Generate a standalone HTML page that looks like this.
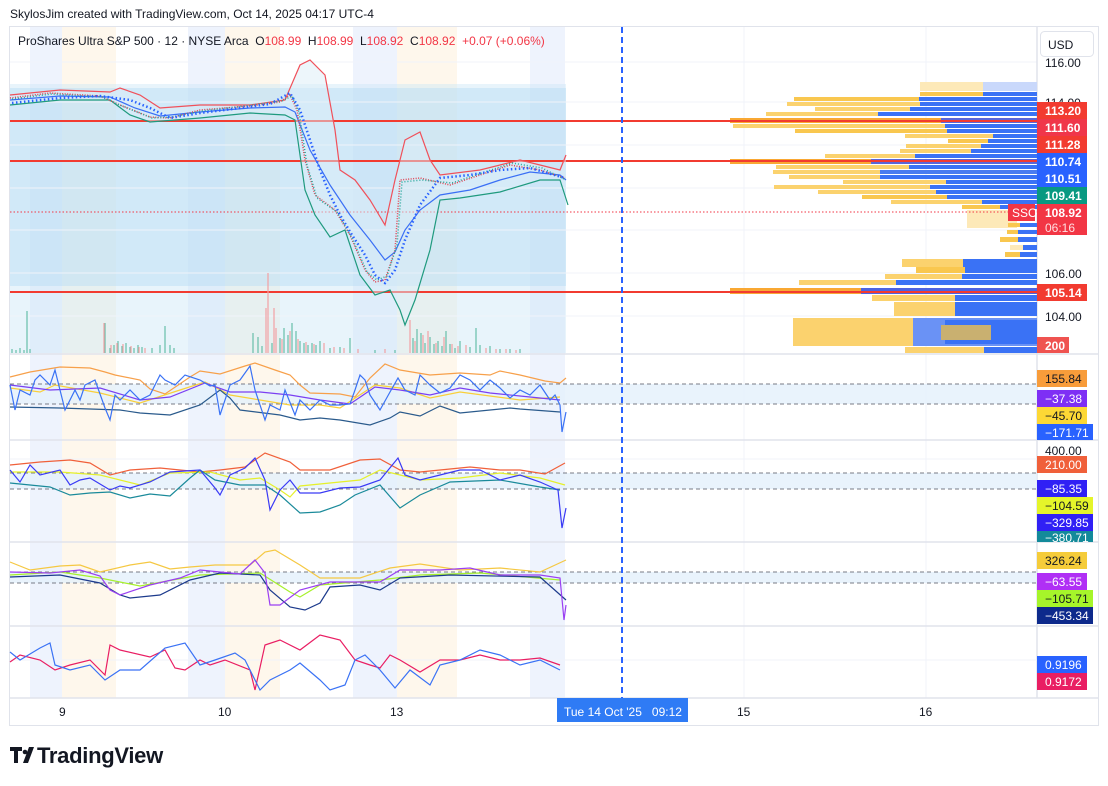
<!DOCTYPE html>
<html><head><meta charset="utf-8"><style>
body{margin:0;width:1108px;height:786px;background:#fff;overflow:hidden;font-family:"Liberation Sans",sans-serif}
svg{position:absolute;left:0;top:0}
text{font-family:"Liberation Sans",sans-serif}
</style></head><body>
<svg width="1108" height="786" viewBox="0 0 1108 786">
<rect x="0" y="0" width="1108" height="786" fill="#fff"/>
<text x="10" y="18" font-size="12" fill="#131722">SkylosJim created with TradingView.com, Oct 14, 2025 04:17 UTC-4</text>
<rect x="9.5" y="26.5" width="1089" height="699" fill="#fff" stroke="#e0e3eb"/>
<!-- session bands -->
<g>
<rect x="30" y="27" width="32" height="671" fill="#eef3fd"/>
<rect x="188" y="27" width="37" height="671" fill="#eef3fd"/>
<rect x="353" y="27" width="44" height="671" fill="#eef3fd"/>
<rect x="530" y="27" width="35" height="671" fill="#eef3fd"/>
<rect x="62" y="27" width="54" height="671" fill="#fef7ec"/>
<rect x="225" y="27" width="55" height="671" fill="#fef7ec"/>
<rect x="397" y="27" width="60" height="671" fill="#fef7ec"/>
</g>
<!-- main pane blue rects -->
<rect x="10" y="84" width="556" height="269" fill="#cce6f7" opacity="0.45"/>
<rect x="10" y="88" width="556" height="198" fill="#b5dcf3" opacity="0.45"/>
<!-- grid -->
<g stroke="#f0f3fa" stroke-width="1">
<line x1="10" y1="62" x2="1037" y2="62"/><line x1="10" y1="102" x2="1037" y2="102"/><line x1="10" y1="145" x2="1037" y2="145"/><line x1="10" y1="188" x2="1037" y2="188"/><line x1="10" y1="230" x2="1037" y2="230"/><line x1="10" y1="273" x2="1037" y2="273"/><line x1="10" y1="316" x2="1037" y2="316"/>
<line x1="744" y1="27" x2="744" y2="698"/><line x1="926" y1="27" x2="926" y2="698"/>
</g>
<!-- pane separators -->
<g stroke="#e0e3eb" stroke-width="1.5">
<line x1="10" y1="354" x2="1098" y2="354"/><line x1="10" y1="440" x2="1098" y2="440"/><line x1="10" y1="542" x2="1098" y2="542"/><line x1="10" y1="626" x2="1098" y2="626"/><line x1="10" y1="698" x2="1098" y2="698"/>
<line x1="1037" y1="27" x2="1037" y2="698"/>
</g>
<!-- volume profile -->
<g>
<rect x="920" y="82" width="117" height="9" fill="#fde9b8"/><rect x="983" y="82" width="54" height="9" fill="#c9d8fb"/>
<rect x="920" y="92" width="117" height="4" fill="#f9c74f"/><rect x="983" y="92" width="54" height="4" fill="#3a72f5"/>
<rect x="794" y="97" width="243" height="4" fill="#f9c74f"/><rect x="919" y="97" width="118" height="4" fill="#3a72f5"/>
<rect x="787" y="102" width="250" height="4" fill="#fbd26e"/><rect x="920" y="102" width="117" height="4" fill="#3a72f5"/>
<rect x="815" y="107" width="222" height="4" fill="#fbd26e"/><rect x="910" y="107" width="127" height="4" fill="#3a72f5"/>
<rect x="766" y="112" width="271" height="4" fill="#fbd26e"/><rect x="878" y="112" width="159" height="4" fill="#3a72f5"/>
<rect x="730" y="118" width="307" height="5" fill="#f9a833"/><rect x="941" y="118" width="96" height="5" fill="#5a66d8"/>
<rect x="733" y="124" width="304" height="4" fill="#fbd26e"/><rect x="945" y="124" width="92" height="4" fill="#3a72f5"/>
<rect x="795" y="129" width="242" height="4" fill="#f9c74f"/><rect x="947" y="129" width="90" height="4" fill="#3a72f5"/>
<rect x="905" y="134" width="132" height="4" fill="#fbd26e"/><rect x="993" y="134" width="44" height="4" fill="#3a72f5"/>
<rect x="948" y="139" width="89" height="4" fill="#f9c74f"/><rect x="988" y="139" width="49" height="4" fill="#3a72f5"/>
<rect x="906" y="144" width="131" height="4" fill="#fbd26e"/><rect x="981" y="144" width="56" height="4" fill="#3a72f5"/>
<rect x="900" y="149" width="137" height="4" fill="#fbd26e"/><rect x="971" y="149" width="66" height="4" fill="#3a72f5"/>
<rect x="825" y="154" width="212" height="4" fill="#fbd26e"/><rect x="915" y="154" width="122" height="4" fill="#3a72f5"/>
<rect x="730" y="159" width="307" height="5" fill="#f9a833"/><rect x="871" y="159" width="166" height="5" fill="#5a66d8"/>
<rect x="776" y="165" width="261" height="4" fill="#fbd26e"/><rect x="909" y="165" width="128" height="4" fill="#3a72f5"/>
<rect x="773" y="170" width="264" height="4" fill="#fbd26e"/><rect x="880" y="170" width="157" height="4" fill="#4a7cf0"/>
<rect x="789" y="175" width="248" height="4" fill="#fbd26e"/><rect x="880" y="175" width="157" height="4" fill="#3a72f5"/>
<rect x="843" y="180" width="194" height="4" fill="#fbd26e"/><rect x="946" y="180" width="91" height="4" fill="#3a72f5"/>
<rect x="774" y="185" width="263" height="4" fill="#fbd26e"/><rect x="930" y="185" width="107" height="4" fill="#3a72f5"/>
<rect x="818" y="190" width="219" height="4" fill="#fbd26e"/><rect x="936" y="190" width="101" height="4" fill="#3a72f5"/>
<rect x="862" y="195" width="175" height="4" fill="#f9c74f"/><rect x="947" y="195" width="90" height="4" fill="#3a72f5"/>
<rect x="891" y="200" width="146" height="4" fill="#fbd26e"/><rect x="982" y="200" width="55" height="4" fill="#3a72f5"/>
<rect x="962" y="205" width="75" height="4" fill="#f9c74f"/><rect x="1000" y="205" width="37" height="4" fill="#3a72f5"/>
<rect x="967" y="210" width="50" height="18" fill="#fde9b8"/>
<rect x="1008" y="223" width="29" height="4" fill="#f9c74f"/><rect x="1020" y="223" width="17" height="4" fill="#3a72f5"/>
<rect x="1007" y="230" width="30" height="4" fill="#f9c74f"/><rect x="1018" y="230" width="19" height="4" fill="#3a72f5"/>
<rect x="1000" y="237" width="37" height="5" fill="#f9c74f"/><rect x="1018" y="237" width="19" height="5" fill="#3a72f5"/>
<rect x="1010" y="245" width="27" height="5" fill="#fde9b8"/><rect x="1023" y="245" width="14" height="5" fill="#3a72f5"/>
<rect x="1005" y="252" width="32" height="5" fill="#f9c74f"/><rect x="1020" y="252" width="17" height="5" fill="#3a72f5"/>
<rect x="902" y="259" width="135" height="8" fill="#fbd26e"/><rect x="963" y="259" width="74" height="8" fill="#3a72f5"/>
<rect x="916" y="267" width="121" height="6" fill="#f9c74f"/><rect x="965" y="267" width="72" height="6" fill="#3a72f5"/>
<rect x="885" y="274" width="152" height="5" fill="#fbd26e"/><rect x="962" y="274" width="75" height="5" fill="#3a72f5"/>
<rect x="799" y="280" width="238" height="5" fill="#fbd26e"/><rect x="896" y="280" width="141" height="5" fill="#3a72f5"/>
<rect x="730" y="288" width="307" height="6" fill="#f9a833"/><rect x="861" y="288" width="176" height="6" fill="#4d63e0"/>
<rect x="872" y="295" width="165" height="6" fill="#fbd26e"/><rect x="955" y="295" width="82" height="6" fill="#3a72f5"/>
<rect x="894" y="302" width="143" height="14" fill="#fbd26e"/><rect x="955" y="302" width="82" height="14" fill="#3a72f5"/>
<rect x="793" y="318" width="244" height="28" fill="#fbd26e"/><rect x="913" y="318" width="124" height="28" fill="#6a92f5"/><rect x="945" y="320" width="92" height="24" fill="#3a72f5"/><rect x="941" y="325" width="50" height="15" fill="#c9b070"/>
<rect x="905" y="347" width="132" height="6" fill="#fbd26e"/><rect x="984" y="347" width="53" height="6" fill="#3a72f5"/>
</g>
<!-- red levels -->
<g stroke="#f23b30" stroke-width="2">
<line x1="10" y1="121" x2="1037" y2="121"/><line x1="10" y1="161" x2="1037" y2="161"/><line x1="10" y1="292" x2="1037" y2="292"/>
</g>
<line x1="10" y1="212" x2="1037" y2="212" stroke="#f23645" stroke-width="1" stroke-dasharray="1.5 2"/>
<!-- volume bars -->
<g stroke-width="1.2">
<path d="M12 353v-4M16 353v-3M20 353v-5M24 353v-3M27 353v-42M30 353v-4M105 353v-30M110 353v-5M114 353v-8M118 353v-12M122 353v-7M126 353v-10M130 353v-6M134 353v-5M138 353v-8M142 353v-6M152 353v-5M160 353v-8M165 353v-27M170 353v-8M174 353v-5M253 353v-20M258 353v-16M262 353v-7M272 353v-10M280 353v-15M284 353v-25M288 353v-18M292 353v-30M296 353v-22M300 353v-12M304 353v-10M308 353v-8M312 353v-10M316 353v-8M320 353v-12M330 353v-5M340 353v-6M350 353v-15M375 353v-3M395 353v-3M413 353v-15M417 353v-24M421 353v-20M425 353v-10M430 353v-16M434 353v-9M438 353v-12M442 353v-7M446 353v-22M450 353v-9M455 353v-5M460 353v-12M470 353v-6M476 353v-25M480 353v-8M490 353v-7M500 353v-4M510 353v-4M520 353v-4" stroke="#67bfa9"/>
<path d="M104 353v-30M111 353v-8M117 353v-10M123 353v-9M131 353v-7M139 353v-6M145 353v-5M268 353v-80M266 353v-45M274 353v-45M276 353v-25M282 353v-14M290 353v-22M298 353v-14M306 353v-11M314 353v-9M324 353v-10M334 353v-6M344 353v-5M358 353v-4M385 353v-4M410 353v-33M415 353v-12M423 353v-18M428 353v-22M436 353v-10M444 353v-16M452 353v-9M458 353v-7M466 353v-8M486 353v-5M496 353v-4M506 353v-4M516 353v-3" stroke="#f2a1a3"/>
</g>
<!-- Bollinger bands -->
<path d="M10 95 L60 90 L110 92 L120 88 L140 95 L160 108 L200 105 L250 105 L285 100 L300 65 L310 60 L325 75 L335 130 L340 170 L355 180 L370 200 L385 225 L395 180 L405 140 L420 132 L430 160 L440 175 L480 170 L520 160 L560 170 L566 155 L566 205 L560 180 L540 180 L500 192 L460 198 L440 200 L430 250 L415 300 L405 325 L400 310 L390 290 L375 295 L360 275 L345 230 L330 237 L315 215 L305 190 L295 120 L285 115 L250 113 L200 118 L150 122 L130 115 L110 100 L60 100 L10 105Z" fill="#dcedf7" opacity="0.5"/>
<polyline fill="none" stroke="#f0505a" stroke-width="1.2" points="10,95 60,90 110,92 120,88 140,95 160,108 200,105 250,105 285,100 300,65 310,60 325,75 335,130 340,170 355,180 370,200 385,225 395,180 405,140 420,132 430,160 440,175 480,170 520,160 560,170 566,155"/>
<polyline fill="none" stroke="#1f9a7e" stroke-width="1.2" points="10,105 60,100 110,100 130,115 150,122 200,118 250,113 285,115 295,120 305,190 315,215 330,237 345,230 360,275 375,295 390,290 400,310 405,325 415,300 430,250 440,200 460,198 500,192 540,180 560,180 568,205"/>
<polyline fill="none" stroke="#3a6ff5" stroke-width="1.2" points="10,100 60,96 110,97 135,108 160,116 200,112 250,108 285,107 295,112 310,150 330,185 350,215 370,240 385,260 395,252 405,230 420,210 440,195 470,190 500,180 530,172 560,175 566,180"/>
<polyline fill="none" stroke="#e04050" stroke-width="1.5" stroke-dasharray="1 1.5" points="10,98 50,93 100,96 120,105 150,117 170,118 200,110 250,106 280,102 290,95 297,110 305,160 315,195 335,210 350,235 365,270 375,282 385,280 395,250 400,180 420,178 450,185 480,175 510,165 540,170 565,178"/>
<polyline fill="none" stroke="#26a69a" stroke-width="1.5" stroke-dasharray="1 2" points="12,99 52,94 102,97 122,106 152,118 172,117 202,111 252,105 282,101 292,96 299,112 307,165 317,198 337,212 352,238 367,272 377,280 387,276 397,245 402,182 422,180 452,183 482,173 512,163 542,168 564,179"/>
<polyline fill="none" stroke="#2962ff" stroke-width="2.5" stroke-dasharray="1.5 2.5" points="12,103 60,98 100,96 130,100 150,108 170,118 200,113 240,108 270,104 290,93 300,110 310,140 320,170 330,195 340,215 352,235 365,255 375,275 385,283 395,270 405,240 420,205 440,178 470,175 500,170 530,168 565,178"/>
<!-- pane2 -->
<rect x="10" y="384" width="1027" height="20" fill="#e3f0fb" opacity="0.8"/>
<g stroke="#787b86" stroke-dasharray="4 3" stroke-width="1"><line x1="10" y1="384" x2="1037" y2="384"/><line x1="10" y1="404" x2="1037" y2="404"/></g>
<polyline fill="none" stroke="#f7a04a" stroke-width="1.2" points="10,377 30,372 60,367 90,368 105,372 115,375 140,380 150,389 165,394 190,377 200,371 220,374 245,366 255,363 275,370 290,375 300,385 310,393 340,394 355,397 370,378 385,364 400,370 430,375 460,373 490,375 500,371 520,375 545,381 560,383 566,378"/>
<polyline fill="none" stroke="#f9cf3a" stroke-width="1.2" points="10,388 40,392 55,385 100,393 140,403 180,390 205,382 230,395 260,400 290,405 320,405 340,408 375,385 400,388 430,398 460,392 490,396 520,400 560,397"/>
<polyline fill="none" stroke="#7b3ff2" stroke-width="1.2" points="10,385 50,390 100,388 140,400 170,397 205,383 230,392 260,392 290,395 320,400 350,404 375,387 400,390 430,395 460,388 490,393 520,396 560,400"/>
<polyline fill="none" stroke="#2a5a8c" stroke-width="1.2" points="10,407 60,408 120,410 140,413 170,415 200,405 220,390 230,398 240,410 280,415 300,420 320,418 340,420 370,425 390,418 400,412 420,416 440,406 460,413 510,408 520,409 560,412"/>
<polyline fill="none" stroke="#3a72f5" stroke-width="1.2" points="10,385 15,410 20,390 30,395 35,380 40,375 50,385 55,370 60,390 65,410 75,390 80,400 85,385 95,380 105,408 110,420 115,395 120,400 130,390 140,400 150,395 160,375 165,380 175,385 185,375 200,380 210,386 215,385 220,415 230,385 240,380 250,366 255,390 265,420 270,405 280,410 285,390 295,415 300,400 310,410 320,400 330,405 340,405 350,404 355,390 360,375 365,380 370,395 380,410 390,392 398,378 405,390 415,395 420,375 430,385 440,393 450,388 460,375 470,380 480,390 490,380 500,388 510,398 520,390 530,395 540,385 550,400 555,395 560,405 562,432 566,412"/>
<!-- pane3 -->
<rect x="10" y="473" width="1027" height="16" fill="#e3f0fb" opacity="0.8"/>
<g stroke="#787b86" stroke-dasharray="4 3"><line x1="10" y1="473" x2="1037" y2="473"/><line x1="10" y1="489" x2="1037" y2="489"/></g>
<line x1="10" y1="459" x2="1037" y2="459" stroke="#f0f3fa"/>
<polyline fill="none" stroke="#f0603a" stroke-width="1.2" points="10,465 40,462 70,460 90,463 110,475 130,470 160,468 180,470 200,472 220,470 245,467 265,453 290,462 300,470 330,470 360,460 380,459 400,470 420,472 440,470 470,467 500,470 520,470 545,474 565,463"/>
<polyline fill="none" stroke="#e5f02a" stroke-width="1.2" points="10,472 60,472 100,475 140,485 170,473 210,472 240,480 260,478 280,490 290,497 300,486 360,480 380,470 420,480 460,478 500,473 540,478 565,485"/>
<polyline fill="none" stroke="#1a8a9a" stroke-width="1.2" points="10,483 50,487 70,495 90,493 110,492 130,498 150,494 170,496 190,478 200,470 215,480 240,485 265,485 280,495 300,513 320,512 340,505 355,495 380,485 400,508 420,495 450,482 500,480 540,487 560,490"/>
<polyline fill="none" stroke="#3a3af5" stroke-width="1.2" points="10,470 20,482 30,465 40,475 60,470 70,485 80,480 90,478 110,490 120,486 130,488 150,482 170,472 200,470 215,488 220,495 230,475 245,468 255,458 265,480 270,510 280,490 290,480 300,493 320,493 340,488 360,487 380,480 398,458 405,475 420,480 440,475 460,470 480,470 500,480 520,475 540,482 558,490 562,528 566,508"/>
<!-- pane4 -->
<rect x="10" y="572" width="1027" height="11" fill="#e3f0fb" opacity="0.8"/>
<g stroke="#787b86" stroke-dasharray="4 3"><line x1="10" y1="572" x2="1037" y2="572"/><line x1="10" y1="583" x2="1037" y2="583"/></g>
<polyline fill="none" stroke="#f5c842" stroke-width="1.2" points="10,562 30,570 60,566 80,565 100,572 130,565 150,562 170,569 190,567 215,565 250,565 265,552 275,550 300,565 320,578 360,578 390,568 420,564 460,570 500,568 540,572 566,560"/>
<polyline fill="none" stroke="#a6f02a" stroke-width="1.2" points="10,575 60,572 100,578 140,586 200,575 260,573 290,592 300,597 320,585 380,580 420,575 480,573 560,580"/>
<polyline fill="none" stroke="#1c3a8c" stroke-width="1.2" points="10,577 60,575 100,583 120,595 130,598 160,595 190,580 220,573 260,575 270,590 290,607 305,610 320,603 330,587 360,585 380,590 400,578 450,575 540,577 566,600"/>
<polyline fill="none" stroke="#9b3ff2" stroke-width="1.2" points="10,572 50,573 80,570 100,576 110,590 120,595 150,585 180,578 200,570 220,572 240,574 255,560 265,573 270,605 280,605 300,590 330,582 380,582 400,570 440,570 470,568 500,575 540,575 560,578 564,620 566,605"/>
<!-- pane5 -->
<line x1="10" y1="660" x2="1037" y2="660" stroke="#f0f3fa"/>
<polyline fill="none" stroke="#e91e63" stroke-width="1.2" points="10,662 20,655 40,660 55,670 70,665 90,660 105,675 110,645 120,650 150,657 165,650 175,668 185,670 200,660 210,665 225,660 250,670 255,690 265,645 280,640 300,650 320,635 340,640 355,660 370,665 380,668 390,655 400,660 420,672 440,660 460,660 480,655 500,660 520,660 540,658 560,665"/>
<polyline fill="none" stroke="#3a72f5" stroke-width="1.2" points="10,652 20,660 40,648 50,643 55,665 70,670 90,665 105,680 120,670 140,670 165,648 185,643 200,665 215,660 235,653 245,660 260,690 270,680 290,670 300,663 320,680 330,690 345,685 355,660 365,655 380,670 395,688 410,670 430,685 440,665 460,660 480,650 500,655 520,665 540,660 560,670"/>
<line x1="622" y1="27" x2="622" y2="698" stroke="#2962ff" stroke-width="2" stroke-dasharray="6 4"/>
<!-- legend -->
<text x="18" y="45" font-size="12" fill="#131722" xml:space="preserve">ProShares Ultra S&amp;P 500 · 12 · NYSE Arca  O<tspan fill="#f23645">108.99</tspan>  H<tspan fill="#f23645">108.99</tspan>  L<tspan fill="#f23645">108.92</tspan>  C<tspan fill="#f23645">108.92  +0.07 (+0.06%)</tspan></text>
<rect x="1040.5" y="31.5" width="53" height="25" rx="4" fill="#fff" stroke="#e0e3eb"/>
<text x="1048" y="49" font-size="12" fill="#131722">USD</text>
<g font-size="12" fill="#131722">
<text x="1045" y="67">116.00</text><text x="1045" y="107">114.00</text><text x="1045" y="278">106.00</text><text x="1045" y="321">104.00</text><text x="1045" y="455">400.00</text>
</g>
<g font-size="12" font-weight="bold" fill="#fff">
<rect x="1037" y="102" width="50" height="17" fill="#f23b30"/><text x="1045" y="115">113.20</text>
<rect x="1037" y="119" width="50" height="17" fill="#f0364a"/><text x="1045" y="132">111.60</text>
<rect x="1037" y="136" width="50" height="17" fill="#f23b30"/><text x="1045" y="149">111.28</text>
<rect x="1037" y="153" width="50" height="17" fill="#2962ff"/><text x="1045" y="166">110.74</text>
<rect x="1037" y="170" width="50" height="17" fill="#2962ff"/><text x="1045" y="183">110.51</text>
<rect x="1037" y="187" width="50" height="17" fill="#089981"/><text x="1045" y="200">109.41</text>
<rect x="1008" y="204" width="27" height="17" fill="#f23645"/><text x="1012" y="217" font-weight="normal">SSO</text>
<rect x="1037" y="204" width="50" height="31" fill="#f23645"/><text x="1045" y="217">108.92</text><text x="1045" y="232" font-weight="normal" fill="#ffdde0">06:16</text>
<rect x="1037" y="284" width="50" height="17" fill="#f23b30"/><text x="1045" y="297">105.14</text>
<rect x="1037" y="337" width="32" height="16" fill="#ef5350"/><text x="1045" y="350">200</text>
</g>
<g font-size="12" fill="#131722">
<rect x="1037" y="370" width="50" height="17" fill="#f89c3a"/><text x="1045" y="383">155.84</text>
<rect x="1037" y="390" width="50" height="17" fill="#7e2ff5"/><text x="1045" y="403" fill="#fff">−37.38</text>
<rect x="1037" y="407" width="50" height="17" fill="#fdd835"/><text x="1045" y="420">−45.70</text>
<rect x="1037" y="424" width="56" height="16" fill="#2962ff"/><text x="1045" y="437" fill="#fff">−171.71</text>
<rect x="1037" y="456" width="50" height="17" fill="#f0603a"/><text x="1045" y="469" fill="#fff">210.00</text>
<rect x="1037" y="480" width="50" height="17" fill="#3020f5"/><text x="1045" y="493" fill="#fff">−85.35</text>
<rect x="1037" y="497" width="56" height="17" fill="#e5f52a"/><text x="1045" y="510">−104.59</text>
<rect x="1037" y="514" width="56" height="17" fill="#3020f5"/><text x="1045" y="527" fill="#fff">−329.85</text>
<rect x="1037" y="531" width="56" height="11" fill="#138a9a"/><text x="1045" y="542" fill="#fff">−380.71</text>
<rect x="1037" y="552" width="50" height="17" fill="#f5cc3a"/><text x="1045" y="565">326.24</text>
<rect x="1037" y="573" width="50" height="17" fill="#b02ff5"/><text x="1045" y="586" fill="#fff">−63.55</text>
<rect x="1037" y="590" width="56" height="17" fill="#a6f52a"/><text x="1045" y="603">−105.71</text>
<rect x="1037" y="607" width="56" height="17" fill="#0d2a8c"/><text x="1045" y="620" fill="#fff">−453.34</text>
<rect x="1037" y="656" width="50" height="17" fill="#2962ff"/><text x="1045" y="669" fill="#fff">0.9196</text>
<rect x="1037" y="673" width="50" height="17" fill="#e91e63"/><text x="1045" y="686" fill="#fff">0.9172</text>
</g>
<g font-size="12" fill="#131722">
<text x="59" y="716">9</text><text x="218" y="716">10</text><text x="390" y="716">13</text><text x="737" y="716">15</text><text x="919" y="716">16</text>
</g>
<rect x="557" y="698" width="131" height="24" fill="#2f7bf5"/>
<text x="564" y="716" font-size="12" fill="#fff" xml:space="preserve">Tue 14 Oct '25   09:12</text>
<g fill="#131722">
<path d="M10 747h12v4h-4v12h-4v-12h-4z"/><circle cx="25" cy="752" r="2.3"/><path d="M29 747h5l-6 16h-5z"/>
</g>
<text x="37" y="763" font-size="22" font-weight="bold" fill="#131722" letter-spacing="-0.3">TradingView</text>
</svg>
</body></html>
